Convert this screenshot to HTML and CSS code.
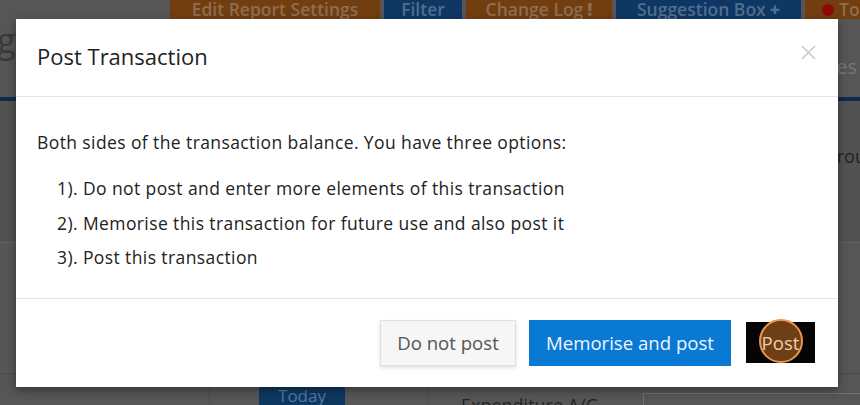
FILE: index.html
```html
<!DOCTYPE html>
<html>
<head>
<meta charset="utf-8">
<link rel="stylesheet" href="styles.css">
</head>
<body>
<div class="page">
  <div class="topbar">
    <span class="tb brown w-edit">Edit Report Settings</span>
    <span class="tb blue w-filter">Filter</span>
    <span class="tb brown w-log">Change Log <b>!</b></span>
    <span class="tb blue w-sug">Suggestion Box <b>+</b></span>
    <span class="tb brown w-to"><i class="dot"></i>To</span>
  </div>
  <div class="headrow">
    <span class="bigh">g</span>
    <span class="tabs">es</span>
  </div>
  <div class="stripe"></div>
  <div class="sec1">
    <span class="rou">rou</span>
  </div>
  <div class="sec2"></div>
  <div class="bottomrow">
    <div class="col c1"></div>
    <div class="col c2"><span class="today">Today</span></div>
    <div class="col c3"><span class="exp">Expenditure A/C</span></div>
    <div class="col c4"><span class="inp"></span></div>
  </div>

  <div class="modal">
    <div class="m-head">
      <h4 class="m-title">Post Transaction</h4>
      <svg class="close" width="15" height="15" viewBox="0 0 15 15"><path d="M1 1L14 14M14 1L1 14" stroke="#c9c9c9" stroke-width="1.6" fill="none"/></svg>
    </div>
    <div class="m-body">
      <p class="lead">Both sides of the transaction balance. You have three options:</p>
      <ul class="opts">
        <li>1). Do not post and enter more elements of this transaction</li>
        <li>2). Memorise this transaction for future use and also post it</li>
        <li>3). Post this transaction</li>
      </ul>
    </div>
    <div class="m-foot">
      <button class="btn btn-default">Do not post</button>
      <button class="btn btn-primary">Memorise and post</button>
      <button class="btn btn-dark"><span class="ring"></span><span class="lbl">Post</span></button>
    </div>
  </div>
</div>
</body>
</html>
```

FILE: styles.css
```css
* { box-sizing: border-box; }
html, body { margin: 0; padding: 0; }
body {
  width: 860px;
  height: 405px;
  overflow: hidden;
  background: #565656;
  font-family: "Open Sans", "DejaVu Sans", sans-serif;
}
.page { position: relative; width: 860px; height: 405px; overflow: hidden; }

.topbar {
  height: 19px;
  display: flex;
  gap: 4px;
  padding-left: 170px;
  white-space: nowrap;
  overflow: hidden;
}
.tb {
  display: flex;
  align-items: center;
  justify-content: center;
  height: 19px;
  font-size: 17.5px;
  line-height: 19px;
  font-weight: 600;
  flex: none;
}
.tb b { font-weight: 800; margin-left: 4px; }
.brown { background: #723e10; color: #8f6d50; }
.blue { background: #0f3763; color: #4f6e90; }
.w-edit { width: 210px; }
.w-filter { width: 78px; }
.w-log { width: 146px; }
.w-sug { width: 185px; }
.w-to { width: 60px; justify-content: flex-start; padding-left: 17px; }
.dot { width: 12px; height: 12px; border-radius: 50%; background: #8e0808; margin-right: 5px; display: inline-block; }

.headrow {
  height: 78px;
  display: flex;
  justify-content: space-between;
  align-items: flex-start;
}
.bigh { font-size: 34px; color: #3a3a3a; line-height: 1; margin-top: 4px; margin-left: -3px; }
.tabs { font-size: 20px; color: #777; margin-top: 38px; margin-right: 3px; line-height: 1; }
.stripe { height: 4px; background: #0e2c4b; }
.sec1 {
  height: 142px;
  background: #525252;
  border-bottom: 1px solid #626262;
  display: flex;
  justify-content: flex-end;
}
.rou { font-size: 18px; color: #222; margin-top: 43px; margin-right: -6px; }
.sec2 { height: 131px; border-bottom: 1px solid #4a4a4a; }
.bottomrow { display: flex; height: 30px; }
.col { border-right: 1px solid #4c4c4c; }
.c1 { width: 210px; }
.c2 { width: 218px; padding-left: 49px; padding-top: 11px; }
.c3 { width: 215px; padding-left: 33px; padding-top: 19px; border-right: none; }
.c4 { flex: 1; border-right: none; padding-top: 19px; }
.today {
  display: inline-block;
  width: 86px;
  height: 22px;
  background: #0e3760;
  color: #5479a1;
  font-size: 17px;
  line-height: 22px;
  text-align: center;
}
.exp { font-size: 18px; color: #222; white-space: nowrap; }
.inp { display: block; height: 20px; border: 1px solid #707070; border-right: none; }

/* modal */
.modal {
  position: absolute;
  left: 16px;
  top: 19px;
  width: 822px;
  height: 368px;
  background: #fff;
  box-shadow: 0 3px 9px rgba(0,0,0,0.4);
  color: #333;
  display: flex;
  flex-direction: column;
}
.m-head {
  height: 78px;
  border-bottom: 1px solid #e5e5e5;
  display: flex;
  align-items: center;
  justify-content: space-between;
  padding: 0 22px 3px 21px;
}
.m-title { margin: 0; font-size: 22px; font-weight: 400; color: #222; line-height: 30px; }
.close { margin-top: -8px; }
.m-body {
  flex: 1;
  padding: 33px 21px 0 21px;
  font-size: 17.5px;
  letter-spacing: 0.4px;
}
.lead { margin: 0; line-height: 24px; color: #222; }
.opts { list-style: none; margin: 17px 0 0 0; padding: 0 0 0 20px; }
.opts li { line-height: 34.5px; color: #222; }
.m-foot {
  height: 89px;
  border-top: 1px solid #e5e5e5;
  display: flex;
  align-items: center;
  justify-content: flex-end;
  padding: 0 23px 1px 0;
}
.btn {
  font-family: "Open Sans", "DejaVu Sans", sans-serif;
  font-size: 18.6px;
  height: 46px;
  border: none;
  padding: 0;
  cursor: pointer;
}
.btn-default {
  width: 136px;
  background: #f6f6f6;
  border: 1px solid #e0e0e0;
  color: #555;
  box-shadow: 0 2px 4px rgba(0,0,0,0.12);
  margin-right: 13px;
}
.btn-primary {
  width: 202px;
  background: #0a79d3;
  color: #eef6fd;
  margin-right: 15px;
}
.btn-dark {
  position: relative;
  width: 69px;
  height: 41px;
  background: #050505;
  color: #eccfb0;
}
.ring {
  position: absolute;
  left: 13px;
  top: -3px;
  width: 44px;
  height: 44px;
  border-radius: 50%;
  background: #6e3f14;
  border: 2px solid #ec9550;
}
.lbl { position: relative; }
```
